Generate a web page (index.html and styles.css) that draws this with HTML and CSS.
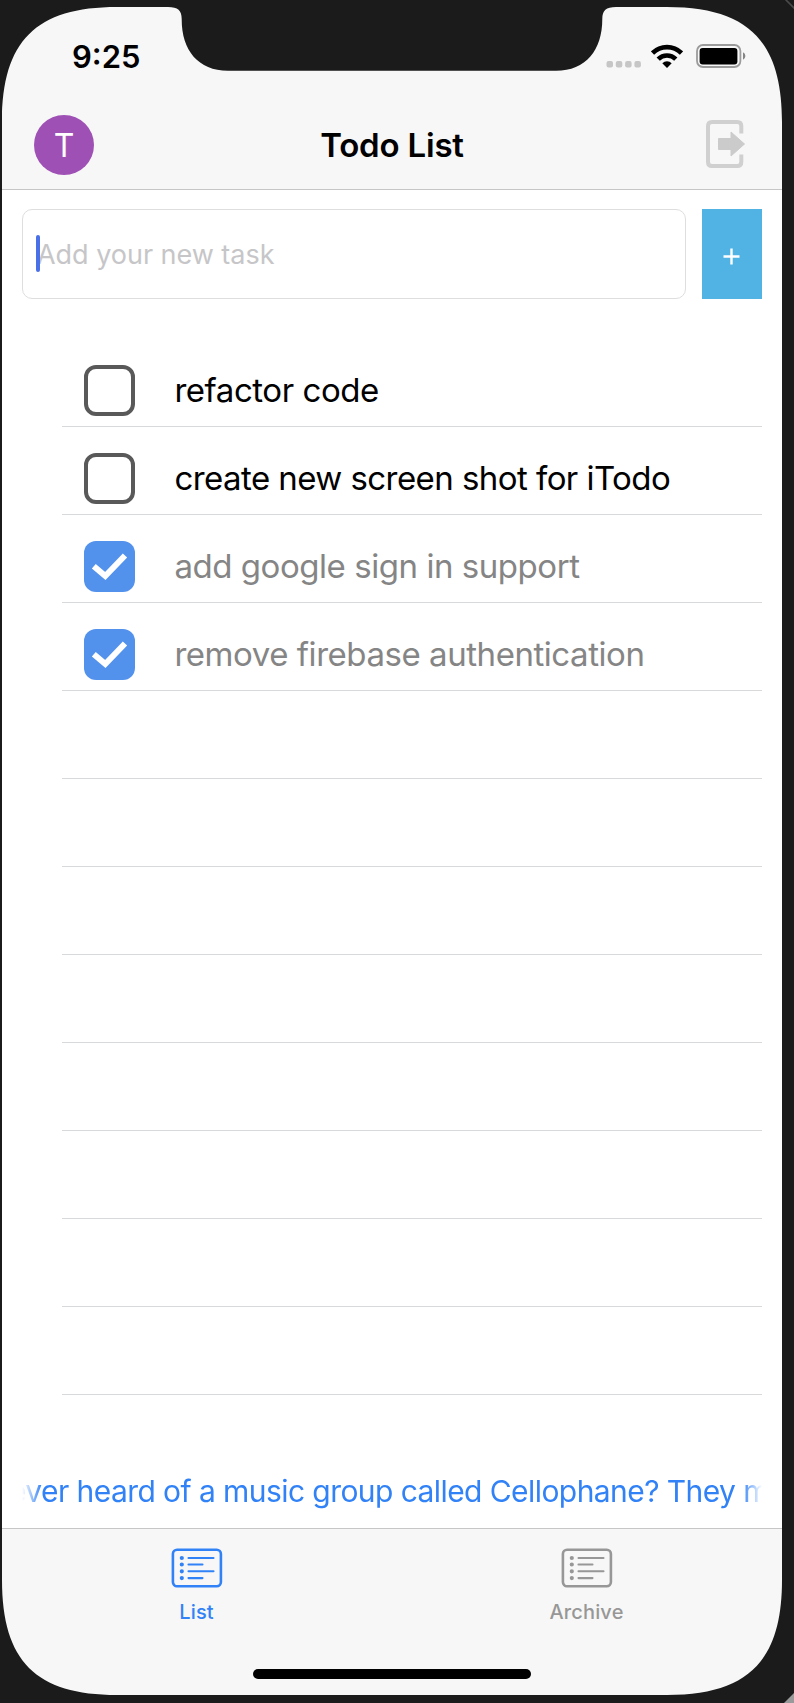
FILE: index.html
```html
<!DOCTYPE html>
<html lang="en">
<head>
<meta charset="utf-8">
<title>Todo List</title>
<link rel="stylesheet" href="styles.css">
</head>
<body>
<div class="device">
  <div class="screen">
    <header class="header">
      <div class="status">
        <span class="time">9:25</span>
        <div class="indicators">
          <svg class="signal" width="36" height="8" viewBox="0 0 36 8" fill="#c6c6c6"><rect x="0.5" y="1" width="6.5" height="6.5" rx="2"/><rect x="9.8" y="1" width="6.5" height="6.5" rx="2"/><rect x="19.1" y="1" width="6.5" height="6.5" rx="2"/><rect x="28.4" y="1" width="6.5" height="6.5" rx="2"/></svg>
          <svg class="wifi" width="32" height="24" viewBox="0 0 32 24" fill="none" stroke="#000" stroke-width="4.6"><path d="M1.5 9.1A20.5 20.5 0 0 1 30.5 9.1"/><path d="M7.2 15.2A12.4 12.4 0 0 1 24.8 15.2"/><path d="M16 24L11.3 19.2A6.8 6.8 0 0 1 20.7 19.2Z" fill="#000" stroke="none"/></svg>
          <svg class="battery" width="50" height="24" viewBox="0 0 50 24"><rect x="1" y="1" width="43.4" height="22" rx="6" fill="none" stroke="#9b9b9b" stroke-width="1.8"/><rect x="3.600" y="4" width="37.800" height="16.600" rx="3" fill="#000"/><path d="M47 8.3Q49.4 9.5 49.4 12T47 15.7Z" fill="#858585"/></svg>
        </div>
      </div>
      <div class="navbar">
        <span class="avatar">T</span>
        <h1 class="title">Todo List</h1>
        <svg class="logout" width="42" height="50" viewBox="0 0 42 50"><path d="M35.3 14.5V7Q35.3 3 31.3 3H6Q2 3 2 7V43Q2 47 6 47H31.3Q35.3 47 35.3 43V35.5" fill="none" stroke="#d0d0d0" stroke-width="4"/><path d="M12.5 19.5H25V13L38.5 25L25 37V30.5H12.5Z" fill="#cbcbcb" stroke="#cbcbcb" stroke-width="1" stroke-linejoin="round"/></svg>
      </div>
    </header>

    <main class="content">
      <div class="entry">
        <div class="field"><span class="caret"></span><span class="placeholder">Add your new task</span></div>
        <button class="add" aria-label="Add"><svg width="17" height="17" viewBox="0 0 17 17"><path d="M8.5 .5V16.5M.5 8.5H16.5" stroke="#fff" stroke-width="2.4"/></svg></button>
      </div>
      <ul class="list">
        <li class="row"><span class="box"></span><span class="task">refactor code</span></li>
        <li class="row"><span class="box"></span><span class="task tight">create new screen shot for iTodo</span></li>
        <li class="row done"><span class="box"><svg width="51" height="51" viewBox="0 0 51 51"><path d="M9.8 25.2L21.3 35L41 14.5" fill="none" stroke="#fff" stroke-width="6"/></svg></span><span class="task">add google sign in support</span></li>
        <li class="row done"><span class="box"><svg width="51" height="51" viewBox="0 0 51 51"><path d="M9.8 25.2L21.3 35L41 14.5" fill="none" stroke="#fff" stroke-width="6"/></svg></span><span class="task">remove firebase authentication</span></li>
        <li class="row"></li><li class="row"></li><li class="row"></li><li class="row"></li>
        <li class="row"></li><li class="row"></li><li class="row"></li><li class="row"></li>
      </ul>
      <div class="marquee"><span class="ticker">ever heard of a music group called Cellophane? They m</span></div>
    </main>

    <nav class="tabs">
      <div class="tab active">
        <svg width="52" height="40" viewBox="0 0 52 40" fill="none" stroke="currentColor"><rect x="1.9" y="1.7" width="48" height="36.6" rx="4.2" stroke-width="2.6"/><path d="M17.5 10H42.5M17.5 16.5H31.5M17.5 23.3H42.5M17.5 30.1H31.5" stroke-width="2.1" stroke-linecap="round"/><path d="M10.8 10h.01M10.8 16.5h.01M10.8 23.3h.01M10.8 30.1h.01" stroke-width="4.2" stroke-linecap="round"/></svg>
        <span class="label">List</span>
      </div>
      <div class="tab">
        <svg width="52" height="40" viewBox="0 0 52 40" fill="none" stroke="currentColor"><rect x="1.9" y="1.7" width="48" height="36.6" rx="4.2" stroke-width="2.6"/><path d="M17.5 10H42.5M17.5 16.5H31.5M17.5 23.3H42.5M17.5 30.1H31.5" stroke-width="2.1" stroke-linecap="round"/><path d="M10.8 10h.01M10.8 16.5h.01M10.8 23.3h.01M10.8 30.1h.01" stroke-width="4.2" stroke-linecap="round"/></svg>
        <span class="label">Archive</span>
      </div>
    </nav>
    <div class="home"><span class="home-bar"></span></div>
  </div>

  <svg class="bezel" width="794" height="1703" viewBox="0 0 794 1703">
    <path fill="#1b1b1b" fill-rule="evenodd" d="M0 0H794V1703H0ZM2 122C2 41 36 7 117 7H168C178 7 181.7 10.5 181.7 19C181.5 50 198 70.8 228 70.8H556C586 70.8 602.3 50 602.3 19C602.3 10.5 606 7 616 7H667C748 7 782 41 782 122V1580C782 1661 748 1695 667 1695H117C36 1695 2 1661 2 1580Z"/>
    <path d="M785 -1L795 9" stroke="#4a4a4c" stroke-width="1.6"/>
    <path d="M794 1693L784 1703H794Z" fill="#9a9a9a"/>
  </svg>
</div>
</body>
</html>
```
FILE: styles.css
```css
* { box-sizing: border-box; }

body {
  margin: 0;
  background: #1b1b1b;
  font-family: Inter, "Liberation Sans", sans-serif;
  color: #000;
}

.device {
  position: relative;
  width: 794px;
  height: 1703px;
  padding: 7px 12px 8px 2px;
  overflow: hidden;
}

.screen {
  display: flex;
  flex-direction: column;
  height: 1688px;
  background: #fff;
}

.bezel {
  position: absolute;
  inset: 0;
  pointer-events: none;
}

.header {
  height: 183px;
  background: #f7f7f7;
  border-bottom: 1px solid #c6c6c6;
}

.status {
  display: flex;
  justify-content: space-between;
  height: 93px;
  padding: 34px 36px 0 70px;
}

.time {
  font-size: 31px;
  line-height: 32px;
  font-weight: 560;
}

.indicators {
  display: flex;
  align-items: flex-start;
}

.signal { margin: 19px 9px 0 0; }
.wifi { margin: 3px 13px 0 0; }
.battery { margin-top: 3px; }

.navbar {
  display: grid;
  grid-template-columns: 60px 1fr 60px;
  align-items: center;
  height: 90px;
  padding: 0 32px;
}

.avatar {
  width: 60px;
  height: 60px;
  border-radius: 50%;
  background: #9f50b5;
  color: #fff;
  font-size: 32px;
  line-height: 61px;
  text-align: center;
}

.title {
  margin: 0;
  font-size: 33px;
  line-height: 40px;
  font-weight: 570;
  letter-spacing: -0.2px;
  text-align: center;
}

.logout {
  justify-self: end;
  margin: 0 2px 2px 0;
}

.content {
  display: flex;
  flex: 1;
  flex-direction: column;
  padding: 19px 20px 0;
}

.entry {
  display: flex;
  gap: 16px;
  height: 90px;
}

.field {
  display: flex;
  align-items: center;
  flex: 1;
  padding: 0 0 1px 13px;
  border: 1px solid #dedede;
  border-radius: 10px;
}

.caret {
  width: 4px;
  height: 37px;
  border-radius: 2px;
  background: #4a70e8;
  margin-right: -3px;
  z-index: 1;
}

.placeholder {
  padding-top: 1px;
  font-size: 27px;
  letter-spacing: -0.03px;
  color: #c6c6c8;
}

.add {
  display: flex;
  align-items: center;
  justify-content: center;
  width: 60px;
  border: 0;
  padding: 5px 2px 0 0;
  background: #50b3e4;
}

.list {
  margin: 40px 0 0 40px;
  padding: 0;
  list-style: none;
}

.row {
  display: flex;
  align-items: center;
  gap: 39px;
  height: 88px;
  padding: 15px 0 0 22.4px;
  border-bottom: 1px solid #d8d9da;
}

.box {
  flex: none;
  width: 51px;
  height: 51px;
  border: 4px solid #595959;
  border-radius: 12px;
}

.box svg { display: block; }

.done .box {
  border: 0;
  background: #5292ed;
}

.task {
  font-size: 33px;
  line-height: 40px;
  letter-spacing: -0.45px;
  white-space: nowrap;
}

.tight { letter-spacing: -0.56px; }

.done .task { color: #858585; }

.marquee {
  display: flex;
  justify-content: flex-start;
  margin-top: 71px;
  overflow: hidden;
  -webkit-mask-image: linear-gradient(90deg, transparent, #000 20px, #000 calc(100% - 20px), transparent);
  mask-image: linear-gradient(90deg, transparent, #000 20px, #000 calc(100% - 20px), transparent);
}

.ticker {
  margin-left: -13px;
  color: #3282f7;
  font-size: 30px;
  line-height: 50px;
  letter-spacing: -0.57px;
  white-space: nowrap;
}

.tabs {
  display: flex;
  height: 110px;
  background: #f7f7f7;
  border-top: 1px solid #c6c6c6;
}

.tab {
  display: flex;
  flex: 1;
  flex-direction: column;
  align-items: center;
  padding: 19px 1px 0 0;
  color: #979797;
}

.active { color: #3282f7; }

.label {
  margin-top: 12px;
  font-size: 20px;
  line-height: 24px;
  font-weight: 500;
  letter-spacing: 0.15px;
}

.home {
  display: flex;
  justify-content: center;
  height: 57px;
  padding-top: 31px;
  background: #f7f7f7;
}

.home-bar {
  width: 278px;
  height: 10px;
  border-radius: 5px;
  background: #000;
}
```
